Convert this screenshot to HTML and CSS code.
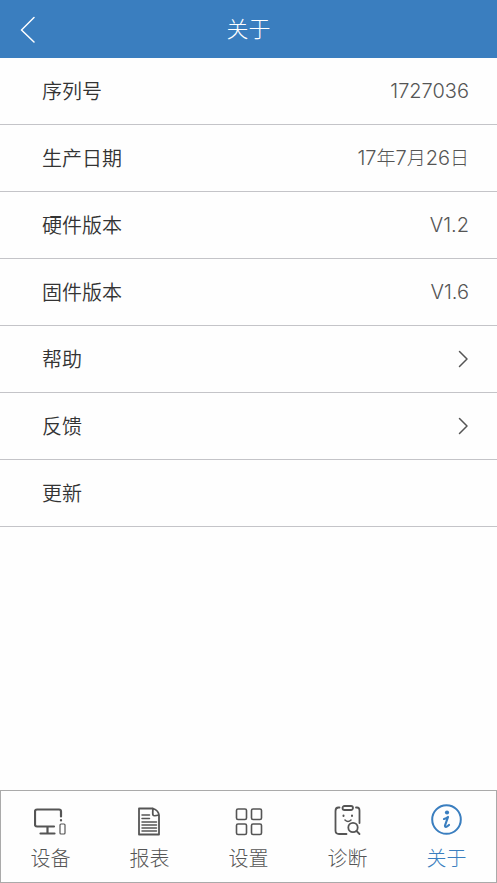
FILE: index.html
```html
<!DOCTYPE html>
<html lang="zh-CN">
<head>
    <meta charset="UTF-8">
    <meta name="viewport" content="width=device-width, initial-scale=1.0">
    <title>关于</title>
    <link rel="stylesheet" href="styles.css">
</head>
<body>
    <header class="top-bar">
        <button class="back-button" type="button" aria-label="返回">
            <svg width="16" height="28" viewBox="0 0 16 28"><path d="M14 2.500L1.500 15L14 27"/></svg>
        </button>
        <h1 class="title">关于</h1>
    </header>

    <main class="content">
        <ul class="list">
            <li class="row"><span>序列号</span><span class="value">1727036</span></li>
            <li class="row"><span>生产日期</span><span class="value">17<span class="unit">年</span>7<span class="unit">月</span>26<span class="unit">日</span></span></li>
            <li class="row"><span>硬件版本</span><span class="value">V1.2</span></li>
            <li class="row"><span>固件版本</span><span class="value">V1.6</span></li>
            <li>
                <a class="row" href="#help">
                    <span>帮助</span>
                    <svg class="chevron" width="11" height="18" viewBox="0 0 11 18"><path d="M1.500 1.500L9 9L1.500 16.500"/></svg>
                </a>
            </li>
            <li>
                <a class="row" href="#feedback">
                    <span>反馈</span>
                    <svg class="chevron" width="11" height="18" viewBox="0 0 11 18"><path d="M1.500 1.500L9 9L1.500 16.500"/></svg>
                </a>
            </li>
            <li><a class="row" href="#update"><span>更新</span></a></li>
        </ul>
    </main>

    <nav class="tab-bar">
        <a class="tab" href="#device">
            <svg class="tab-icon" viewBox="0 0 34 34">
                <path stroke-width="2.200" d="M20 22.500H3Q1 22.500 1 20.500V7.500Q1 5.500 3 5.500H25Q27 5.500 27 7.500V12.500M13.500 23V29M6.500 29.500H20.500"/>
                <path stroke-width="2.200" d="M27 16V16.500"/>
                <rect stroke-width="1.200" x="26" y="20" width="5" height="10" rx="1"/>
            </svg>
            <span>设备</span>
        </a>
        <a class="tab" href="#report">
            <svg class="tab-icon" viewBox="0 0 34 34">
                <path stroke-width="1.800" d="M19.500 4.500H6V30.500H26V11Q20.500 12.500 20 11Q19.500 10 20 4.500Q25.500 6.500 26 11"/>
                <path stroke-width="1.500" d="M9 11H16.500M9 14.500H16.500M9 18H23.500M9 21H23.500M9 24H23.500M9 27H23.500"/>
            </svg>
            <span>报表</span>
        </a>
        <a class="tab" href="#settings">
            <svg class="tab-icon" viewBox="0 0 34 34">
                <rect x="4.500" y="5" width="10" height="10.500" rx="1.500"/>
                <rect x="19.500" y="5" width="10" height="10.500" rx="1.500"/>
                <rect x="4.500" y="20" width="10" height="10.500" rx="1.500"/>
                <rect x="19.500" y="20" width="10" height="10.500" rx="1.500"/>
            </svg>
            <span>设置</span>
        </a>
        <a class="tab" href="#diagnosis">
            <svg class="tab-icon" viewBox="0 0 34 34">
                <path stroke-width="1.800" d="M8.500 3.500H7.500Q4.500 3.500 4.500 7V26.500Q4.500 30 8 30H15.500M25 3.500H26Q28.500 3.500 28.500 6.500V19"/>
                <rect stroke-width="1.800" x="11.500" y="2" width="10.500" height="4" rx="2"/>
                <path stroke-width="2" d="M12.500 11.500V12M21 11.500V12"/>
                <path d="M14 16Q17 19 20 16"/>
                <circle stroke-width="1.800" cx="22" cy="23.500" r="4.700"/>
                <path stroke-width="1.800" d="M25.500 27L28.500 30"/>
            </svg>
            <span>诊断</span>
        </a>
        <a class="tab active" href="#about" aria-current="page">
            <svg class="tab-icon" viewBox="0 0 34 34">
                <circle stroke-width="2" cx="16.500" cy="15.500" r="14.300"/>
                <circle class="dot" cx="17" cy="8.500" r="2.100"/>
                <path stroke-width="2.200" d="M14 15Q16.500 14.500 18 13L15 21.500Q15 24.500 19 21"/>
            </svg>
            <span>关于</span>
        </a>
    </nav>
</body>
</html>
```

FILE: styles.css
```css
* {
    box-sizing: border-box;
}
body {
    display: flex;
    flex-direction: column;
    min-height: 100vh;
    margin: 0;
    font-family: "Noto Sans CJK SC", sans-serif;
    font-size: 20px;
    font-weight: 350;
    line-height: 28px;
    color: #333;
    background: #fefefe;
}
a {
    color: inherit;
    text-decoration: none;
}
svg {
    fill: none;
    stroke: currentColor;
    stroke-linecap: round;
    stroke-linejoin: round;
}

/* header */
.top-bar {
    display: grid;
    grid-template-columns: 56px 1fr 56px;
    align-items: center;
    height: 58px;
    color: #fff;
    background: #3a7ebf;
}
.back-button {
    display: flex;
    align-items: center;
    height: 58px;
    padding: 0 20px;
    border: none;
    color: inherit;
    background: none;
    cursor: pointer;
}
.back-button svg {
    flex: none;
    stroke-width: 1.5;
}
.title {
    margin: 0;
    padding-bottom: 4px;
    font-size: 22px;
    font-weight: 300;
    text-align: center;
}

/* list */
.content {
    flex: 1;
}
.list {
    margin: 0;
    padding: 0;
    list-style: none;
}
.row {
    display: flex;
    align-items: center;
    justify-content: space-between;
    height: 67px;
    padding: 0 28px 0 42px;
    border-bottom: 1px solid #c4c4c8;
}
.value {
    font-family: Inter, "Noto Sans CJK SC", sans-serif;
    font-weight: 300;
    color: #555;
}
.unit {
    font-size: 19px;
}
.chevron {
    stroke: #555;
    stroke-width: 1.5;
}

/* bottom tabs */
.tab-bar {
    display: flex;
    height: 93px;
    border: 1px solid #aaa;
}
.tab {
    flex: 1;
    display: flex;
    flex-direction: column;
    align-items: center;
    gap: 6px;
    padding-top: 13px;
    font-weight: 300;
    color: #555;
}
.tab-icon {
    width: 34px;
    height: 34px;
    stroke-width: 1.6;
}
.tab.active {
    color: #3a7ebf;
}
.dot {
    fill: currentColor;
    stroke: none;
}
```
